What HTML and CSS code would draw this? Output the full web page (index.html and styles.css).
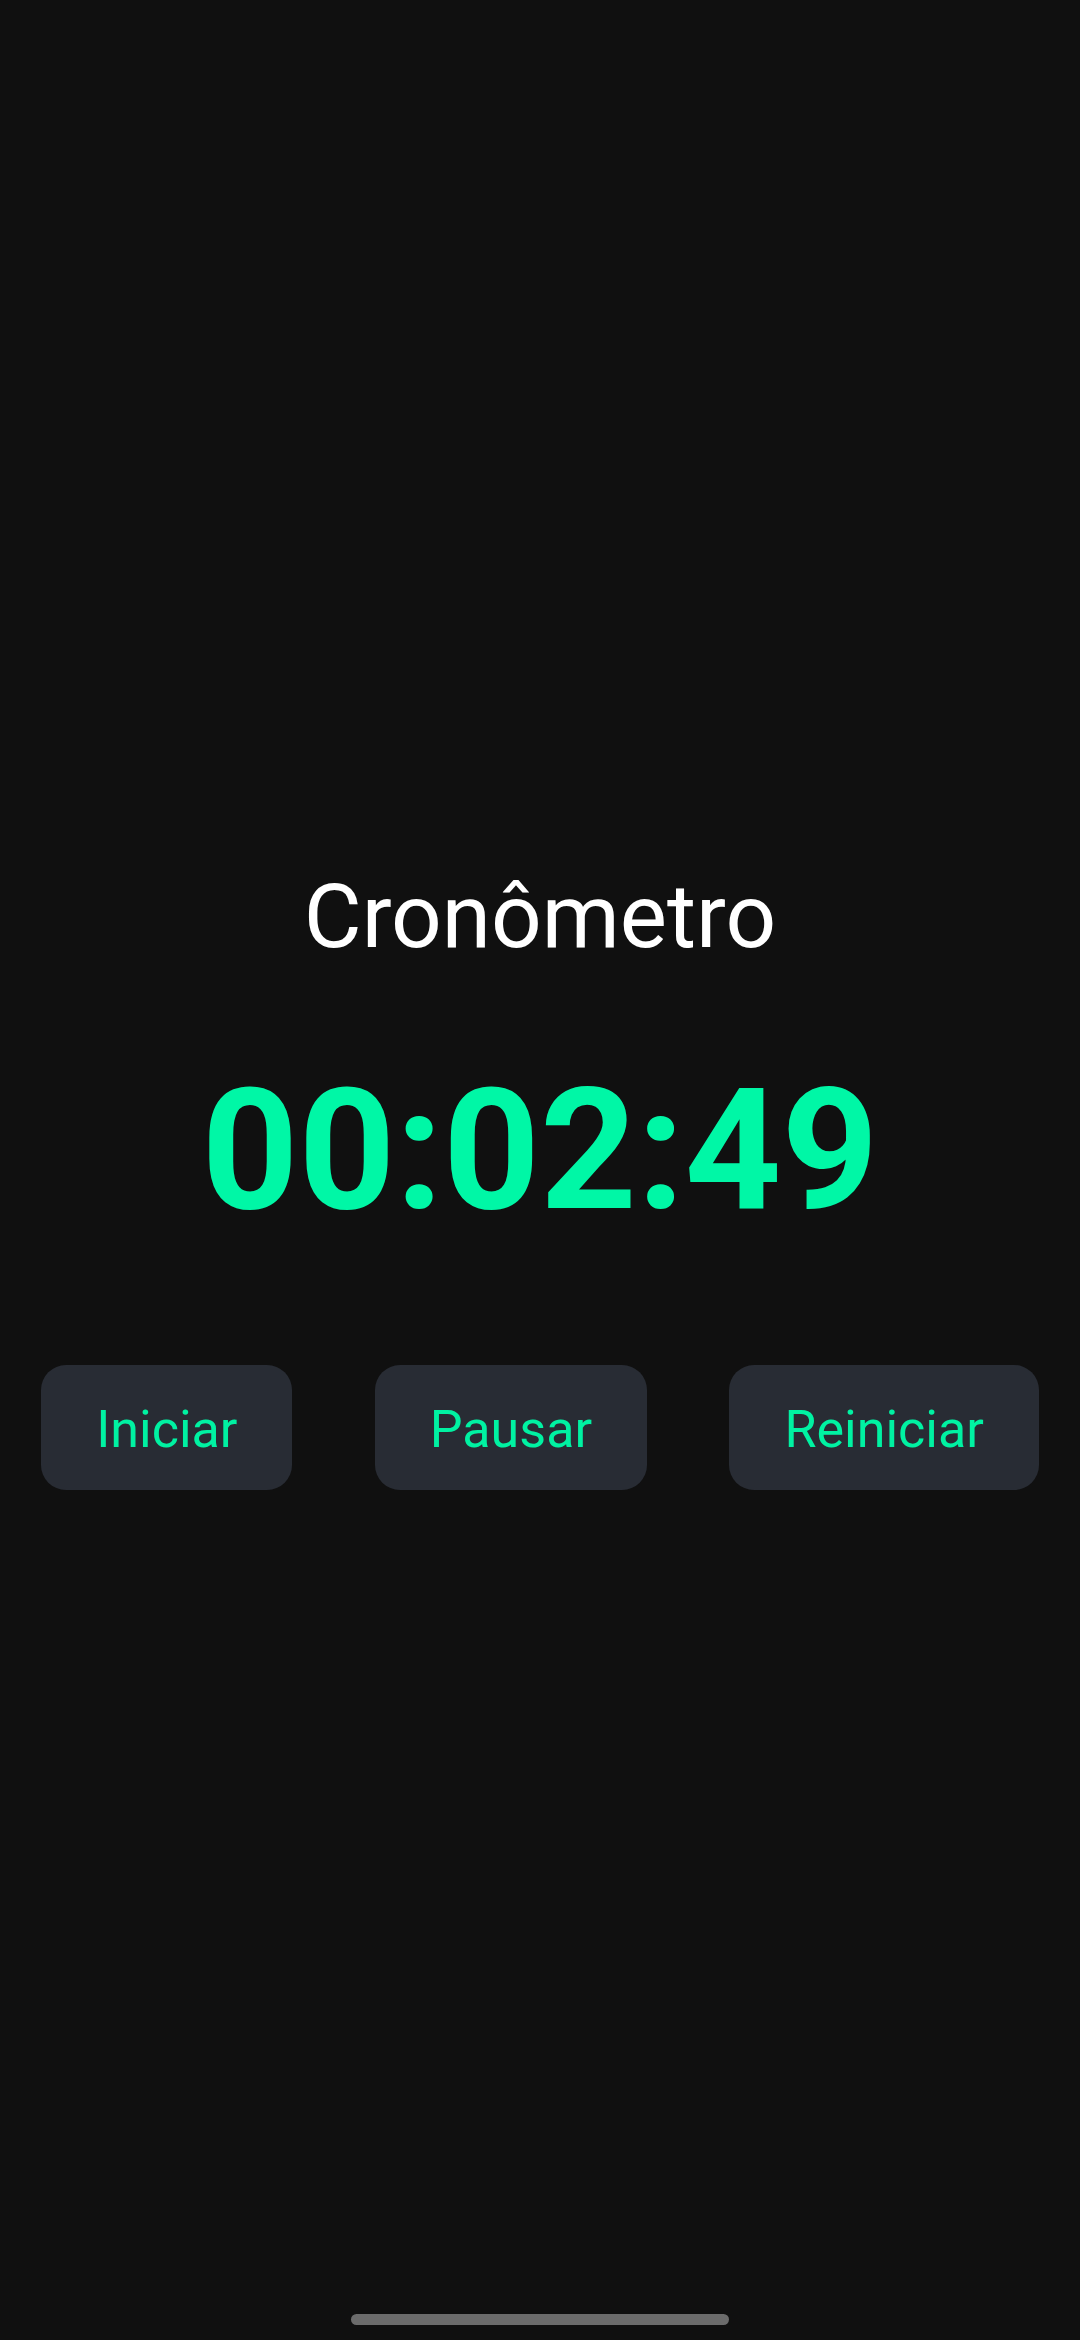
FILE: index.html
```html
<!DOCTYPE html>
<html lang="pt-BR">
<head>
<meta charset="utf-8">
<title>Cronômetro</title>
<link rel="stylesheet" href="styles.css">
</head>
<body>
<main class="screen">
  <h1 class="title">Cronômetro</h1>
  <div class="timer">00:02:49</div>
  <div class="controls">
    <button class="btn btn-start">Iniciar</button>
    <button class="btn btn-pause">Pausar</button>
    <button class="btn btn-reset">Reiniciar</button>
  </div>
</main>
<div class="home-indicator"></div>
</body>
</html>
```

FILE: styles.css
```css
html, body {
  margin: 0;
  padding: 0;
  background: #101010;
}
body {
  width: 1080px;
  height: 2340px;
  overflow: hidden;
  position: relative;
  font-family: Roboto, "Noto Sans", sans-serif;
}
.screen {
  box-sizing: border-box;
  height: 2340px;
  display: flex;
  flex-direction: column;
  align-items: center;
  padding-top: 864px;
}
.title {
  margin: 0;
  font-size: 89px;
  font-weight: 400;
  color: #ffffff;
  line-height: normal;
}
.timer {
  margin-top: 82px;
  font-size: 169px;
  font-weight: 700;
  color: #00f7a6;
  line-height: normal;
}
.controls {
  width: 100%;
  margin-top: 116px;
  display: flex;
  justify-content: space-around;
}
.btn {
  box-sizing: border-box;
  border: none;
  background: #282c34;
  color: #00f2a2;
  font-family: Roboto, "Noto Sans", sans-serif;
  font-size: 52px;
  line-height: normal;
  height: 125px;
  padding: 4px 55px 0;
  border-radius: 25px;
}
.home-indicator {
  position: absolute;
  left: 351px;
  top: 2314px;
  width: 378px;
  height: 11px;
  border-radius: 6px;
  background: #6b6b6b;
}
```
